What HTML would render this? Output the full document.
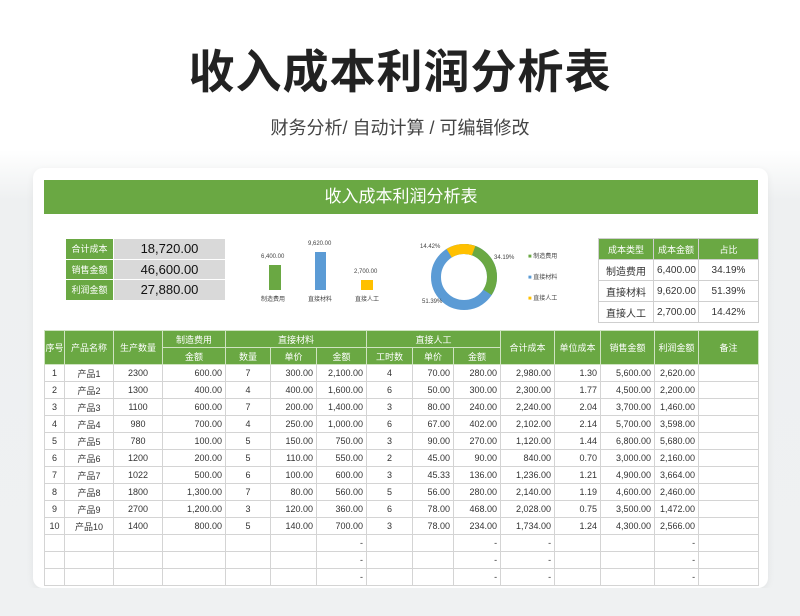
<!DOCTYPE html>
<html><head><meta charset="utf-8"><style>
*{margin:0;padding:0;box-sizing:border-box}
body{width:800px;height:616px;overflow:hidden;background:linear-gradient(#fff 0,#fff 150px,#eef0f1 200px,#eff1f2 616px);font-family:"Liberation Sans","Noto Sans CJK SC",sans-serif;position:relative}
.t{position:absolute;left:0;width:800px;text-align:center}
.card{position:absolute;left:33px;top:168px;width:735px;height:420px;background:#fff;border-radius:10px;box-shadow:0 2px 8px rgba(0,0,0,.06)}
.g{background:#6aa843;color:#fff}
.abs{position:absolute}
table{border-collapse:collapse;table-layout:fixed;position:absolute}
td{border:1px solid #d4d4d4;font-size:9px;color:#333;height:17px;padding:0 3px;white-space:nowrap;overflow:hidden}
.h td{background:#6aa843;color:#fff;border-color:#cfe3c1;text-align:center}
.c{text-align:center}.r{text-align:right}
.sum td{height:20.5px;font-size:13px;text-align:center;border:1px solid #fff}
.sum td.l{background:#6aa843;color:#fff;font-size:9px}
.sum td.v{background:#d9d9d9;color:#111}
.rt td{height:21px;font-size:10px;text-align:center;border-color:#cfcfcf}
.sm{font-size:6px;color:#444;position:absolute;white-space:nowrap}
</style></head><body>
<div class="t" style="top:36px;font-size:46px;font-weight:bold;color:#222;letter-spacing:1px">收入成本利润分析表</div>
<div class="t" style="top:114px;font-size:18px;color:#444">财务分析/ 自动计算 / 可编辑修改</div>
<div class="card"></div>
<div class="abs g" style="left:44px;top:180px;width:714px;height:34px;text-align:center;font-size:17px;line-height:34px">收入成本利润分析表</div>

<table class="sum" style="left:65px;top:238px;width:160px">
<col style="width:48px"><col style="width:112px">
<tr><td class="l">合计成本</td><td class="v">18,720.00</td></tr>
<tr><td class="l">销售金额</td><td class="v">46,600.00</td></tr>
<tr><td class="l">利润金额</td><td class="v">27,880.00</td></tr>
</table>

<div class="abs" style="left:269px;top:265px;width:12px;height:25px;background:#6aa843"></div>
<div class="abs" style="left:315px;top:252px;width:11px;height:38px;background:#5b9bd5"></div>
<div class="abs" style="left:361px;top:280px;width:12px;height:10px;background:#ffc000"></div>
<div class="sm" style="left:261px;top:254px">6,400.00</div>
<div class="sm" style="left:308px;top:241px">9,620.00</div>
<div class="sm" style="left:354px;top:269px">2,700.00</div>
<div class="sm" style="left:261px;top:294px">制造费用</div>
<div class="sm" style="left:308px;top:294px">直接材料</div>
<div class="sm" style="left:355px;top:294px">直接人工</div>

<svg class="abs" style="left:420px;top:230px" width="100" height="85" viewBox="420 230 100 85">
<circle cx="464" cy="277" r="28" fill="none" stroke="#5b9bd5" stroke-width="10"/>
<circle cx="464" cy="277" r="28" fill="none" stroke="#6aa843" stroke-width="10" stroke-dasharray="60.1 200" transform="rotate(-90 464 277)"/>
<circle cx="464" cy="277" r="28" fill="none" stroke="#ffc000" stroke-width="10" stroke-dasharray="25.4 200" transform="rotate(238 464 277)"/>
</svg>
<div class="sm" style="left:420px;top:244px">14.42%</div>
<div class="sm" style="left:494px;top:255px">34.19%</div>
<div class="sm" style="left:422px;top:299px">51.39%</div>
<div class="sm" style="left:528px;top:251px"><span style="color:#6aa843">■</span> 制造费用</div>
<div class="sm" style="left:528px;top:272px"><span style="color:#5b9bd5">■</span> 直接材料</div>
<div class="sm" style="left:528px;top:293px"><span style="color:#ffc000">■</span> 直接人工</div>

<table class="rt" style="left:598px;top:238px;width:160px">
<col style="width:55px"><col style="width:45px"><col style="width:60px">
<tr class="h"><td style="font-size:9px">成本类型</td><td style="font-size:9px">成本金额</td><td style="font-size:9px">占比</td></tr>
<tr><td>制造费用</td><td class="r">6,400.00</td><td>34.19%</td></tr>
<tr><td>直接材料</td><td class="r">9,620.00</td><td>51.39%</td></tr>
<tr><td>直接人工</td><td class="r">2,700.00</td><td>14.42%</td></tr>
</table>

<table style="left:44px;top:330px;width:714px">
<col style="width:20px"><col style="width:49px"><col style="width:49px"><col style="width:63px"><col style="width:45px"><col style="width:46px"><col style="width:50px"><col style="width:46px"><col style="width:41px"><col style="width:47px"><col style="width:54px"><col style="width:46px"><col style="width:54px"><col style="width:44px"><col style="width:60px">
<tr class="h"><td rowspan="2" style="padding:0">序号</td><td rowspan="2">产品名称</td><td rowspan="2">生产数量</td><td>制造费用</td><td colspan="3">直接材料</td><td colspan="3">直接人工</td><td rowspan="2">合计成本</td><td rowspan="2">单位成本</td><td rowspan="2">销售金额</td><td rowspan="2">利润金额</td><td rowspan="2">备注</td></tr>
<tr class="h"><td>金额</td><td>数量</td><td>单价</td><td>金额</td><td>工时数</td><td>单价</td><td>金额</td></tr>
<tr><td class="c">1</td><td class="c">产品1</td><td class="c">2300</td><td class="r">600.00</td><td class="c">7</td><td class="r">300.00</td><td class="r">2,100.00</td><td class="c">4</td><td class="r">70.00</td><td class="r">280.00</td><td class="r">2,980.00</td><td class="r">1.30</td><td class="r">5,600.00</td><td class="r">2,620.00</td><td></td></tr>
<tr><td class="c">2</td><td class="c">产品2</td><td class="c">1300</td><td class="r">400.00</td><td class="c">4</td><td class="r">400.00</td><td class="r">1,600.00</td><td class="c">6</td><td class="r">50.00</td><td class="r">300.00</td><td class="r">2,300.00</td><td class="r">1.77</td><td class="r">4,500.00</td><td class="r">2,200.00</td><td></td></tr>
<tr><td class="c">3</td><td class="c">产品3</td><td class="c">1100</td><td class="r">600.00</td><td class="c">7</td><td class="r">200.00</td><td class="r">1,400.00</td><td class="c">3</td><td class="r">80.00</td><td class="r">240.00</td><td class="r">2,240.00</td><td class="r">2.04</td><td class="r">3,700.00</td><td class="r">1,460.00</td><td></td></tr>
<tr><td class="c">4</td><td class="c">产品4</td><td class="c">980</td><td class="r">700.00</td><td class="c">4</td><td class="r">250.00</td><td class="r">1,000.00</td><td class="c">6</td><td class="r">67.00</td><td class="r">402.00</td><td class="r">2,102.00</td><td class="r">2.14</td><td class="r">5,700.00</td><td class="r">3,598.00</td><td></td></tr>
<tr><td class="c">5</td><td class="c">产品5</td><td class="c">780</td><td class="r">100.00</td><td class="c">5</td><td class="r">150.00</td><td class="r">750.00</td><td class="c">3</td><td class="r">90.00</td><td class="r">270.00</td><td class="r">1,120.00</td><td class="r">1.44</td><td class="r">6,800.00</td><td class="r">5,680.00</td><td></td></tr>
<tr><td class="c">6</td><td class="c">产品6</td><td class="c">1200</td><td class="r">200.00</td><td class="c">5</td><td class="r">110.00</td><td class="r">550.00</td><td class="c">2</td><td class="r">45.00</td><td class="r">90.00</td><td class="r">840.00</td><td class="r">0.70</td><td class="r">3,000.00</td><td class="r">2,160.00</td><td></td></tr>
<tr><td class="c">7</td><td class="c">产品7</td><td class="c">1022</td><td class="r">500.00</td><td class="c">6</td><td class="r">100.00</td><td class="r">600.00</td><td class="c">3</td><td class="r">45.33</td><td class="r">136.00</td><td class="r">1,236.00</td><td class="r">1.21</td><td class="r">4,900.00</td><td class="r">3,664.00</td><td></td></tr>
<tr><td class="c">8</td><td class="c">产品8</td><td class="c">1800</td><td class="r">1,300.00</td><td class="c">7</td><td class="r">80.00</td><td class="r">560.00</td><td class="c">5</td><td class="r">56.00</td><td class="r">280.00</td><td class="r">2,140.00</td><td class="r">1.19</td><td class="r">4,600.00</td><td class="r">2,460.00</td><td></td></tr>
<tr><td class="c">9</td><td class="c">产品9</td><td class="c">2700</td><td class="r">1,200.00</td><td class="c">3</td><td class="r">120.00</td><td class="r">360.00</td><td class="c">6</td><td class="r">78.00</td><td class="r">468.00</td><td class="r">2,028.00</td><td class="r">0.75</td><td class="r">3,500.00</td><td class="r">1,472.00</td><td></td></tr>
<tr><td class="c">10</td><td class="c">产品10</td><td class="c">1400</td><td class="r">800.00</td><td class="c">5</td><td class="r">140.00</td><td class="r">700.00</td><td class="c">3</td><td class="r">78.00</td><td class="r">234.00</td><td class="r">1,734.00</td><td class="r">1.24</td><td class="r">4,300.00</td><td class="r">2,566.00</td><td></td></tr>
<tr><td></td><td></td><td></td><td></td><td></td><td></td><td class="r">-</td><td></td><td></td><td class="r">-</td><td class="r">-</td><td></td><td></td><td class="r">-</td><td></td></tr>
<tr><td></td><td></td><td></td><td></td><td></td><td></td><td class="r">-</td><td></td><td></td><td class="r">-</td><td class="r">-</td><td></td><td></td><td class="r">-</td><td></td></tr>
<tr><td></td><td></td><td></td><td></td><td></td><td></td><td class="r">-</td><td></td><td></td><td class="r">-</td><td class="r">-</td><td></td><td></td><td class="r">-</td><td></td></tr>
</table>
<div class="abs" style="left:0;top:588px;width:800px;height:28px;background:#eff1f2"></div>
</body></html>
